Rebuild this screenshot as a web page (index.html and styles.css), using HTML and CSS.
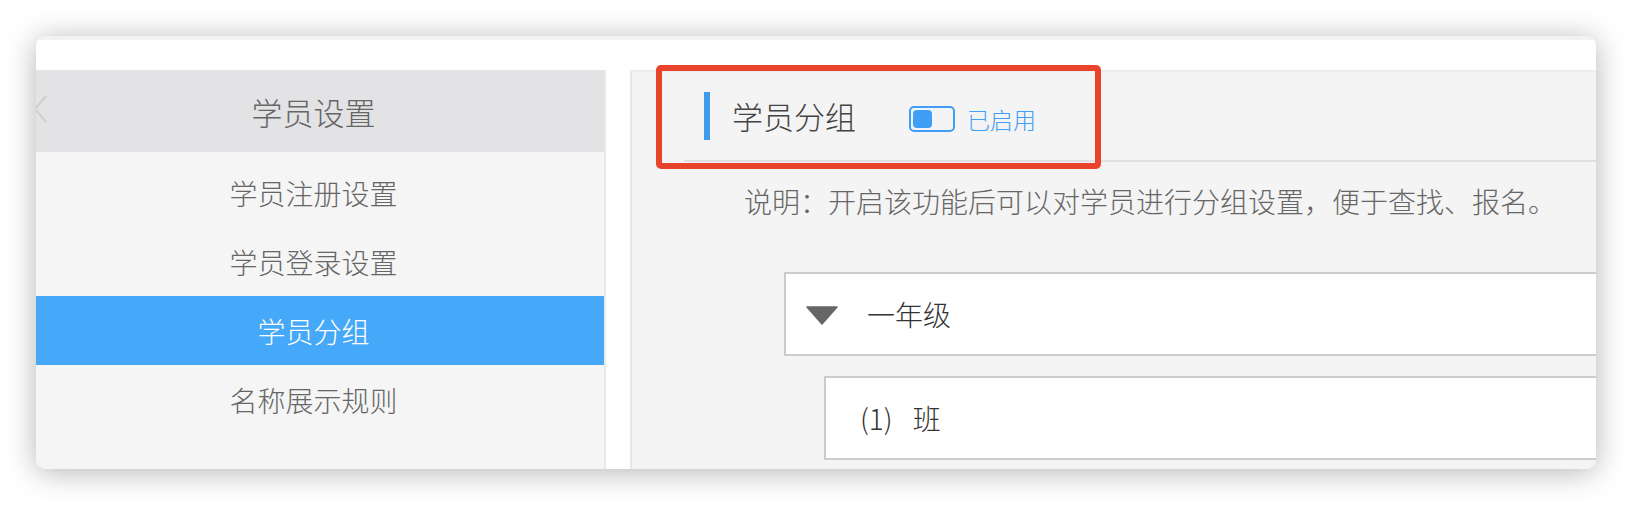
FILE: index.html
```html
<!DOCTYPE html>
<html lang="zh-CN">
<head>
<meta charset="utf-8">
<title>学员分组</title>
<link rel="stylesheet" href="styles.css">
</head>
<body>
<div class="stage">
  <div class="card">
    <div class="card-top"></div>
    <div class="card-body">
      <aside class="sidebar">
        <div class="side-head">
          <svg class="back" width="14" height="28" viewBox="0 0 14 28"><path d="M13 1 L2 14 L13 27" fill="none" stroke="#cfcfcf" stroke-width="2"/></svg>
          <span class="side-title">学员设置</span>
          <span></span>
        </div>
        <ul class="side-list">
          <li class="side-item">学员注册设置</li>
          <li class="side-item">学员登录设置</li>
          <li class="side-item active">学员分组</li>
          <li class="side-item">名称展示规则</li>
        </ul>
      </aside>
      <main class="panel">
        <div class="panel-head">
          <span class="head-bar"></span>
          <span class="head-title">学员分组</span>
          <span class="toggle"><span class="knob"></span></span>
          <span class="toggle-label">已启用</span>
        </div>
        <p class="desc">说明：开启该功能后可以对学员进行分组设置，便于查找、报名。</p>
        <div class="group">
          <svg class="caret" width="32" height="19" viewBox="0 0 32 19"><path d="M1 1 H31 L16 18 Z" fill="#666" stroke="#666" stroke-width="1.5" stroke-linejoin="round"/></svg>
          <span class="group-name">一年级</span>
        </div>
        <div class="sub">
          <span class="sub-name">(1)<span class="sub-word">班</span></span>
        </div>
        <div class="mark"></div>
      </main>
    </div>
  </div>
</div>
</body>
</html>
```

FILE: styles.css
```css
* { box-sizing: border-box; }
html, body { margin: 0; padding: 0; background: #ffffff; }
body { font-family: "Noto Sans CJK SC", "Noto Sans", sans-serif; font-weight: 300; }

.stage { padding: 36px 36px 0 36px; height: 506px; }

.card {
  width: 1560px;
  height: 433px;
  background: #ffffff;
  border-radius: 10px;
  overflow: hidden;
  box-shadow: 0 3px 30px rgba(0, 0, 0, 0.30);
  display: flex;
  flex-direction: column;
}

.card-top {
  height: 34px;
  flex: none;
  border-top: 4px solid #f2f2f2;
  background: #ffffff;
}

.card-body { flex: 1; display: flex; min-height: 0; }

.sidebar {
  flex: none;
  width: 583px;
  margin-left: -13px;
  background: #f5f5f5;
  border-right: 2px solid #e8eaea;
  border-top: 1px solid #e6e6e8;
}

.side-head {
  height: 81px;
  background: #e3e2e5;
  display: grid;
  grid-template-columns: 1fr auto 1fr;
  align-items: center;
  padding-left: 10px;
  padding-right: 10px;
}
.back { justify-self: start; margin-top: -6px; }
.side-title { font-size: 31px; line-height: 40px; color: #666666; }

.side-list { list-style: none; margin: 0; padding: 6px 0 0 0; }
.side-item {
  height: 69px;
  display: flex;
  align-items: center;
  justify-content: center;
  font-size: 28px;
  color: #666666;
}
.side-item.active { background: #46a8f8; color: #ffffff; }

.panel {
  flex: 1;
  position: relative;
  margin-left: 24px;
  background: #f4f4f4;
  border-left: 2px solid #e6e8e8;
  border-top: 2px solid #eceeee;
}

.panel-head {
  margin-left: 52px;
  height: 90px;
  border-bottom: 2px solid #e0e0e0;
  display: flex;
  align-items: center;
  padding-left: 20px;
}
.head-bar { width: 6px; height: 48px; background: #3d9be9; }
.head-title { margin-left: 22px; font-size: 31px; line-height: 40px; color: #444444; }
.toggle {
  margin-left: 53px;
  margin-top: 6px;
  width: 46px;
  height: 26px;
  border: 2px solid #3f9ef5;
  border-radius: 5px;
  padding: 2px;
  display: flex;
}
.knob { width: 19px; height: 18px; background: #3f9ef5; border-radius: 4px; }
.toggle-label { margin-left: 12px; margin-top: 6px; font-size: 23px; line-height: 30px; color: #3f9ef5; }

.desc {
  margin: 19px 0 0 112px;
  font-size: 28px;
  line-height: 40px;
  color: #666666;
}

.group {
  margin: 51px -20px 0 152px;
  height: 84px;
  background: #ffffff;
  border: 2px solid #cccccc;
  display: flex;
  align-items: center;
  padding-left: 20px;
}
.caret { margin-top: 3px; }
.group-name { margin-left: 29px; font-size: 28px; line-height: 40px; color: #333333; }

.sub {
  margin: 20px -20px 0 192px;
  height: 84px;
  background: #ffffff;
  border: 2px solid #cccccc;
  display: flex;
  align-items: center;
  padding-left: 34px;
}
.sub-name { font-size: 28px; line-height: 40px; color: #333333; }
.sub-word { margin-left: 20px; }

.mark {
  position: absolute;
  left: 24px;
  top: -7px;
  width: 445px;
  height: 104px;
  border: 6px solid #e9432b;
  border-radius: 5px;
}
```
